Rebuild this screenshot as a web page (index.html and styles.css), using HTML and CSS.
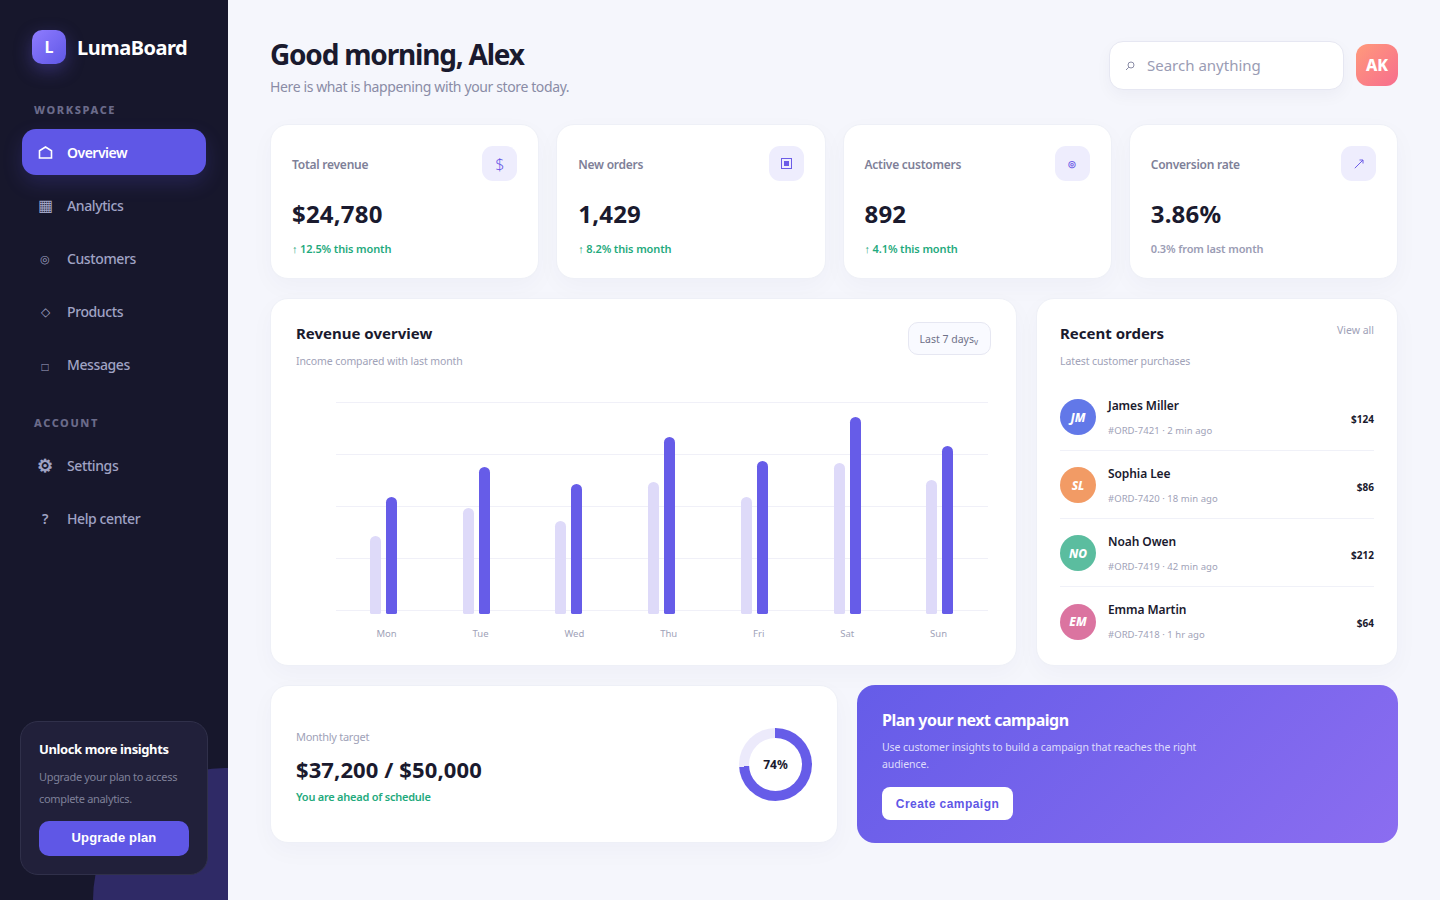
FILE: index.html
```html
<!DOCTYPE html>
<html lang="en">

<head>
    <meta charset="UTF-8">
    <title>LumaBoard</title>
    <link rel="stylesheet" href="styles.css">
</head>

<body>
    <aside class="sidebar">
        <div class="brand">
            <div class="brand-mark">L</div>
            <div class="brand-name">LumaBoard</div>
        </div>

        <div class="nav-label">WORKSPACE</div>
        <a class="nav-item active">
            <span class="nav-icon">
                <svg width="15" height="13" viewBox="0 0 15 13"><path d="M1.5 12V4.8L7.5 1l6 3.8V12z" fill="none" stroke="#fff" stroke-width="1.6"/></svg>
            </span>Overview</a>
        <a class="nav-item"><span class="nav-icon grid">▦</span>Analytics</a>
        <a class="nav-item"><span class="nav-icon small">◎</span>Customers</a>
        <a class="nav-item"><span class="nav-icon medium">◇</span>Products</a>
        <a class="nav-item"><span class="nav-icon medium low">□</span>Messages</a>

        <div class="nav-label second">ACCOUNT</div>
        <a class="nav-item"><span class="nav-icon gear">⚙</span>Settings</a>
        <a class="nav-item"><span class="nav-icon help">?</span>Help center</a>

        <div class="upgrade">
            <div class="upgrade-title">Unlock more insights</div>
            <div class="upgrade-text">Upgrade your plan to access complete analytics.</div>
            <button class="upgrade-btn">Upgrade plan</button>
        </div>
    </aside>

    <main class="main">
        <header class="topbar">
            <div>
                <h1 class="greeting">Good morning, Alex</h1>
                <div class="greeting-sub">Here is what is happening with your store today.</div>
            </div>
            <div class="top-right">
                <div class="search">
                    <svg class="search-icon" width="10" height="10" viewBox="0 0 10 10"><circle cx="6" cy="4" r="3" fill="none" stroke="#8a8ca6"/><path d="M3.8 6.2L1 9" stroke="#8a8ca6"/></svg>
                    Search anything
                </div>
                <div class="user-badge">AK</div>
            </div>
        </header>

        <section class="stats">
            <div class="card stat">
                <div class="stat-top"><span class="stat-label">Total revenue</span><span class="stat-icon dollar">$</span></div>
                <div class="stat-value">$24,780</div>
                <div class="stat-note up">↑ 12.5% this month</div>
            </div>
            <div class="card stat">
                <div class="stat-top">
                    <span class="stat-label">New orders</span>
                    <span class="stat-icon">
                        <svg width="11" height="11" viewBox="0 0 11 11"><rect x="0.5" y="0.5" width="10" height="10" fill="none" stroke="#6c5ce7"/><rect x="3" y="3" width="5" height="5" fill="#6c5ce7"/></svg>
                    </span>
                </div>
                <div class="stat-value">1,429</div>
                <div class="stat-note up">↑ 8.2% this month</div>
            </div>
            <div class="card stat">
                <div class="stat-top"><span class="stat-label">Active customers</span><span class="stat-icon small">◎</span></div>
                <div class="stat-value">892</div>
                <div class="stat-note up">↑ 4.1% this month</div>
            </div>
            <div class="card stat">
                <div class="stat-top">
                    <span class="stat-label">Conversion rate</span>
                    <span class="stat-icon">
                        <svg width="10" height="10" viewBox="0 0 10 10"><path d="M0.8 9.2L9 1M5.5 1H9v3.5" fill="none" stroke="#6c5ce7"/></svg>
                    </span>
                </div>
                <div class="stat-value">3.86%</div>
                <div class="stat-note">0.3% from last month</div>
            </div>
        </section>

        <section class="middle">
            <div class="card revenue">
                <div class="card-head">
                    <div>
                        <div class="card-title">Revenue overview</div>
                        <div class="card-sub">Income compared with last month</div>
                    </div>
                    <div class="range">Last 7 days<span class="range-arrow">v</span></div>
                </div>
                <div class="plot">
                    <div class="bars">
                        <div class="bar-pair"><i class="bar light" style="height:78px"></i><i class="bar dark" style="height:117px"></i></div>
                        <div class="bar-pair"><i class="bar light" style="height:106px"></i><i class="bar dark" style="height:147px"></i></div>
                        <div class="bar-pair"><i class="bar light" style="height:93px"></i><i class="bar dark" style="height:130px"></i></div>
                        <div class="bar-pair"><i class="bar light" style="height:132px"></i><i class="bar dark" style="height:177px"></i></div>
                        <div class="bar-pair"><i class="bar light" style="height:117px"></i><i class="bar dark" style="height:153px"></i></div>
                        <div class="bar-pair"><i class="bar light" style="height:151px"></i><i class="bar dark" style="height:197px"></i></div>
                        <div class="bar-pair"><i class="bar light" style="height:134px"></i><i class="bar dark" style="height:168px"></i></div>
                    </div>
                </div>
                <div class="days">
                    <span>Mon</span><span>Tue</span><span>Wed</span><span>Thu</span><span>Fri</span><span>Sat</span><span>Sun</span>
                </div>
            </div>

            <div class="card orders">
                <div class="card-head">
                    <div>
                        <div class="card-title">Recent orders</div>
                        <div class="card-sub">Latest customer purchases</div>
                    </div>
                    <a class="view-all">View all</a>
                </div>
                <div class="order">
                    <div class="avatar blue">JM</div>
                    <div class="order-info">
                        <div class="order-name">James Miller</div>
                        <div class="order-meta">#ORD-7421 · 2 min ago</div>
                    </div>
                    <div class="order-price">$124</div>
                </div>
                <div class="order">
                    <div class="avatar orange">SL</div>
                    <div class="order-info">
                        <div class="order-name">Sophia Lee</div>
                        <div class="order-meta">#ORD-7420 · 18 min ago</div>
                    </div>
                    <div class="order-price">$86</div>
                </div>
                <div class="order">
                    <div class="avatar green">NO</div>
                    <div class="order-info">
                        <div class="order-name">Noah Owen</div>
                        <div class="order-meta">#ORD-7419 · 42 min ago</div>
                    </div>
                    <div class="order-price">$212</div>
                </div>
                <div class="order">
                    <div class="avatar pink">EM</div>
                    <div class="order-info">
                        <div class="order-name">Emma Martin</div>
                        <div class="order-meta">#ORD-7418 · 1 hr ago</div>
                    </div>
                    <div class="order-price">$64</div>
                </div>
            </div>
        </section>

        <section class="bottom">
            <div class="card target">
                <div>
                    <div class="target-label">Monthly target</div>
                    <div class="target-value">$37,200 / $50,000</div>
                    <div class="target-note">You are ahead of schedule</div>
                </div>
                <div class="donut"><div class="donut-hole">74%</div></div>
            </div>
            <div class="promo">
                <div class="promo-title">Plan your next campaign</div>
                <div class="promo-text">Use customer insights to build a campaign that reaches the right audience.</div>
                <button class="promo-btn">Create campaign</button>
            </div>
        </section>
    </main>
</body>

</html>
```

FILE: styles.css
```css
* {
    box-sizing: border-box;
}

body {
    margin: 0;
    height: 900px;
    overflow: hidden;
    display: flex;
    background-color: #f5f6fc;
    color: #1a1a2e;
    font-family: "Noto Sans", sans-serif;
}

/* sidebar */
.sidebar {
    position: relative;
    overflow: hidden;
    width: 228px;
    flex-shrink: 0;
    height: 900px;
    padding: 30px 22px 0;
    background-color: #17172c;
    display: flex;
    flex-direction: column;
}

.sidebar::after {
    content: "";
    position: absolute;
    left: 93px;
    top: 768px;
    width: 264px;
    height: 264px;
    border-radius: 50%;
    background-color: #2f2a66;
}

.brand {
    display: flex;
    align-items: center;
    gap: 11px;
    margin-left: 10px;
}

.brand-mark {
    width: 34px;
    height: 34px;
    border-radius: 10px;
    background: linear-gradient(135deg, #8f7cff, #5f57e6);
    box-shadow: 0 6px 18px rgba(108, 92, 231, 0.35);
    color: #fff;
    font-size: 16px;
    font-weight: 700;
    display: flex;
    align-items: center;
    justify-content: center;
}

.brand-name {
    color: #fff;
    font-size: 20px;
    font-weight: 700;
    letter-spacing: -0.5px;
}

.nav-label {
    margin: 38px 0 12px 12px;
    color: #6b6b8a;
    font-size: 11px;
    font-weight: 800;
    letter-spacing: 1.6px;
    line-height: 15px;
}

.nav-label.second {
    margin-top: 21px;
}

.nav-item {
    height: 46px;
    margin-bottom: 7px;
    padding-left: 15px;
    border-radius: 14px;
    display: flex;
    align-items: center;
    color: #a0a3c4;
    font-size: 14px;
    font-weight: 500;
    letter-spacing: -0.4px;
}

.nav-item.active {
    background-color: #5f57e6;
    color: #fff;
    font-weight: 600;
    letter-spacing: -0.5px;
    box-shadow: 0 8px 20px rgba(95, 87, 230, 0.2);
}

.nav-icon {
    width: 16px;
    margin-right: 14px;
    display: flex;
    justify-content: center;
    font-size: 14px;
}

.nav-icon.grid {
    font-size: 16px;
}

.nav-icon.small {
    font-size: 11px;
}

.nav-icon.medium {
    font-size: 12px;
}

.nav-icon.low {
    margin-top: 4px;
}

.nav-icon.gear {
    font-size: 18px;
    font-weight: 700;
}

.nav-icon.help {
    font-size: 14px;
    font-weight: 600;
}

.upgrade {
    position: absolute;
    z-index: 1;
    left: 20px;
    top: 721px;
    width: 188px;
    height: 154px;
    padding: 17px 18px 0;
    border: 1px solid #30304a;
    border-radius: 18px;
    background-color: #21203a;
}

.upgrade-title {
    color: #fff;
    font-size: 13px;
    font-weight: 700;
    letter-spacing: -0.4px;
    line-height: 20px;
}

.upgrade-text {
    margin-top: 7px;
    color: #7f8099;
    font-size: 11px;
    letter-spacing: -0.32px;
    line-height: 22px;
}

.upgrade-btn {
    width: 150px;
    height: 35px;
    margin-top: 11px;
    padding: 0 0 2px;
    border: 0;
    border-radius: 10px;
    background-color: #5f57e6;
    color: #fff;
    font-family: "Liberation Sans", sans-serif;
    font-size: 13px;
    font-weight: 700;
    letter-spacing: 0.15px;
}

/* main */
.main {
    flex: 1;
    padding: 30px 42px 0;
}

.topbar {
    display: flex;
    justify-content: space-between;
    align-items: flex-start;
    height: 94px;
}

.greeting {
    margin: 0;
    font-size: 28px;
    font-weight: 700;
    line-height: 48px;
    letter-spacing: -1.2px;
}

.greeting-sub {
    color: #8a8ca6;
    font-size: 14px;
    letter-spacing: -0.38px;
    line-height: 18px;
}

.top-right {
    display: flex;
    align-items: center;
    gap: 12px;
    margin-top: 11px;
}

.search {
    width: 235px;
    height: 49px;
    padding: 0 0 2px 15px;
    border: 1px solid #e6e7f2;
    border-radius: 14px;
    background-color: #fff;
    box-shadow: 0 6px 16px rgba(30, 30, 80, 0.04);
    display: flex;
    align-items: center;
    color: #9a9cb4;
    font-size: 15px;
}

.search-icon {
    margin: 3px 12px 0 0;
}

.user-badge {
    width: 42px;
    height: 42px;
    margin-bottom: 1px;
    border-radius: 12px;
    background: linear-gradient(135deg, #ff9a7b, #f76d8e);
    color: #fff;
    font-size: 16px;
    font-weight: 800;
    display: flex;
    align-items: center;
    justify-content: center;
}

.card {
    background-color: #fff;
    border: 1px solid #eef0f7;
    border-radius: 18px;
    box-shadow: 0 8px 24px rgba(30, 30, 80, 0.03);
}

.stats {
    display: grid;
    grid-template-columns: repeat(4, 1fr);
    gap: 17px;
}

.stat {
    height: 155px;
    padding: 21px 21px 0;
}

.stat-top {
    display: flex;
    justify-content: space-between;
    align-items: center;
}

.stat-label {
    margin-top: 2px;
    color: #7e8098;
    font-size: 12px;
    font-weight: 600;
    letter-spacing: -0.25px;
}

.stat-icon {
    width: 35px;
    height: 35px;
    border-radius: 11px;
    background-color: #eeedfd;
    color: #6c5ce7;
    font-size: 15px;
    display: flex;
    align-items: center;
    justify-content: center;
}

.stat-icon.dollar {
    font-size: 16px;
    font-weight: 300;
}

.stat-icon.small {
    font-size: 9px;
    font-weight: 700;
}

.stat-value {
    margin-top: 17px;
    font-size: 24px;
    font-weight: 700;
    letter-spacing: 0.2px;
    line-height: 32px;
}

.stat-note {
    margin-top: 11px;
    color: #9a9cb4;
    font-size: 11px;
    font-weight: 600;
    letter-spacing: -0.12px;
    line-height: 15px;
}

.stat-note.up {
    color: #1faa7d;
}

.middle {
    display: grid;
    grid-template-columns: 747px 1fr;
    gap: 19px;
    margin-top: 19px;
}

.revenue,
.orders {
    height: 368px;
}

.revenue {
    padding: 24px 25px 0;
}

.orders {
    padding: 24px 23px 0;
}

.card-head {
    display: flex;
    justify-content: space-between;
    align-items: flex-start;
}

.card-title {
    font-size: 15px;
    font-weight: 700;
    line-height: 20px;
}

.card-sub {
    margin-top: 10px;
    color: #a0a2b8;
    font-size: 10.5px;
    letter-spacing: -0.1px;
    line-height: 17px;
}

.revenue .range {
    margin-top: -1px;
}

.range {
    height: 33px;
    padding: 0 12px 0 11px;
    border: 1px solid #e6e7f2;
    border-radius: 10px;
    background-color: #f9faff;
    display: flex;
    align-items: center;
    color: #6f7188;
    font-size: 10.5px;
}

.range-arrow {
    font-size: 8px;
    margin-top: 5px;
}

.plot {
    margin: 32px 0 0 40px;
    width: 652px;
    height: 212px;
    background-image: repeating-linear-gradient(#f0f0f8 0 1px, transparent 1px 52px);
}

.bars {
    height: 100%;
    margin-right: 1.8px;
    padding-left: 1px;
    display: flex;
    justify-content: space-around;
    align-items: flex-end;
}

.bar-pair {
    display: flex;
    align-items: flex-end;
    gap: 5px;
}

.bar {
    display: block;
    width: 11px;
    border-radius: 6px 6px 2px 2px;
}

.bar.light {
    background-color: #dedaf9;
}

.bar.dark {
    background-color: #665ce8;
}

.days {
    margin: 13px 0 0 42.5px;
    width: 646.5px;
    display: flex;
    justify-content: space-around;
    color: #a0a2b8;
    font-size: 9.5px;
    line-height: 14px;
}

.view-all {
    color: #a0a2b8;
    font-size: 10.5px;
    line-height: 15px;
}

.order {
    height: 68px;
    padding-top: 1px;
    display: flex;
    align-items: center;
    border-bottom: 1px solid #f0f1f8;
}

.order:last-child {
    border-bottom: 0;
}

.orders .card-head {
    margin-bottom: 13px;
}

.avatar {
    width: 36px;
    height: 36px;
    border-radius: 50%;
    color: #fff;
    font-size: 12px;
    font-style: italic;
    font-weight: 800;
    display: flex;
    align-items: center;
    justify-content: center;
}

.avatar.blue { background-color: #6278e8; }
.avatar.orange { background-color: #f29b65; }
.avatar.green { background-color: #5bbd9f; }
.avatar.pink { background-color: #db74a0; }

.order-info {
    flex: 1;
    margin-left: 12px;
}

.order-name {
    font-size: 12px;
    font-weight: 600;
    letter-spacing: -0.08px;
    line-height: 17px;
}

.order-meta {
    margin-top: 10px;
    color: #a0a2b8;
    font-size: 9.5px;
    letter-spacing: 0.05px;
    line-height: 14px;
}

.order-price {
    margin-top: 3px;
    font-size: 10px;
    font-weight: 700;
}

.bottom {
    display: grid;
    grid-template-columns: 568px 1fr;
    gap: 19px;
    margin-top: 19px;
}

.target {
    height: 158px;
    padding: 6px 25px 0;
    display: flex;
    justify-content: space-between;
    align-items: center;
}

.target-label {
    color: #a0a2b8;
    font-size: 11px;
    letter-spacing: -0.28px;
    line-height: 16px;
}

.target-value {
    margin-top: 9px;
    font-size: 22px;
    font-weight: 700;
    letter-spacing: 0.1px;
    line-height: 30px;
}

.target-note {
    margin-top: 5px;
    color: #1faa7d;
    font-size: 11px;
    font-weight: 600;
    letter-spacing: -0.24px;
    line-height: 16px;
}

.donut {
    width: 73px;
    height: 73px;
    margin-bottom: 5px;
    border-radius: 50%;
    background: conic-gradient(#665ce8 0 74%, #eceafb 74% 100%);
    display: flex;
    align-items: center;
    justify-content: center;
}

.donut-hole {
    width: 53px;
    height: 53px;
    border-radius: 50%;
    background-color: #fff;
    font-size: 12px;
    font-weight: 700;
    display: flex;
    align-items: center;
    justify-content: center;
}

.promo {
    height: 158px;
    padding: 24px 25px 0;
    border-radius: 18px;
    background: linear-gradient(135deg, #655ce8, #8b6df0);
    color: #fff;
}

.promo-title {
    font-size: 16px;
    font-weight: 700;
    letter-spacing: -0.5px;
    line-height: 22px;
}

.promo-text {
    width: 330px;
    margin-top: 8px;
    color: #dedcfb;
    font-size: 10.5px;
    letter-spacing: -0.08px;
    line-height: 17px;
}

.promo-btn {
    width: 131px;
    height: 33px;
    margin-top: 14px;
    border: 0;
    border-radius: 8px;
    background-color: #fff;
    color: #5f57e6;
    font-family: "Liberation Sans", sans-serif;
    font-size: 12px;
    font-weight: 700;
    letter-spacing: 0.45px;
}
```
